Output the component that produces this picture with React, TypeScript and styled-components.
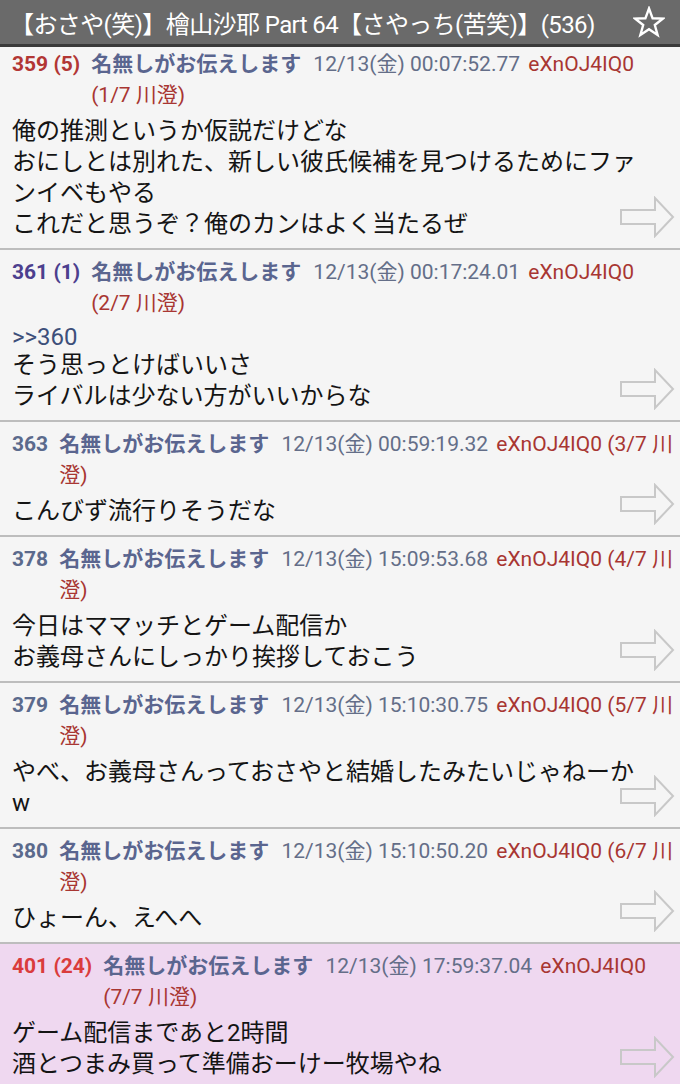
import styled, { createGlobalStyle } from "styled-components";

const GlobalStyle = createGlobalStyle`
  html, body {
    margin: 0;
    padding: 0;
    background: #f5f5f5;
  }
  body {
    font-family: Roboto, "Noto Sans CJK JP", sans-serif;
    overflow: hidden;
  }
`;

const Screen = styled.div`
  width: 680px;
  height: 1084px;
  overflow: hidden;
  display: flex;
  flex-direction: column;
`;

const TitleBar = styled.header`
  flex: none;
  height: 44px;
  background: #6a6a6a;
  border-bottom: 3px solid #3a3a3a;
  display: flex;
  align-items: center;
  padding: 0 14px 0 10px;
  gap: 8px;
`;

const Title = styled.h1`
  flex: 1;
  margin: 0;
  font-size: 24px;
  font-weight: 400;
  color: #ffffff;
  white-space: nowrap;
  overflow: hidden;
  letter-spacing: -0.6px;
`;

const StarButton = styled.button`
  flex: none;
  width: 34px;
  height: 36px;
  border: none;
  padding: 0;
  background: transparent;
  display: flex;
  align-items: center;
  justify-content: center;
`;

const List = styled.main`
  flex: 1;
  overflow: hidden;
`;

const Post = styled.article<{ $pink?: boolean; $first?: boolean }>`
  position: relative;
  background: ${({ $pink }) => ($pink ? "#efd8f0" : "#f5f5f5")};
  border-top: ${({ $first }) => ($first ? "none" : "2px solid #bdbdbd")};
  padding: ${({ $first }) => ($first ? "2px" : "7px")} 4px 8px 12px;
`;

const MetaRow = styled.div`
  display: flex;
  align-items: flex-start;
  font-size: 21px;
  line-height: 31px;
`;

const ResNumber = styled.span<{ $color: string }>`
  flex: none;
  font-weight: 700;
  color: ${({ $color }) => $color};
  margin-right: 11px;
  white-space: nowrap;
`;

const MetaText = styled.div`
  flex: 1;
  min-width: 0;
`;

const Name = styled.span`
  font-weight: 700;
  color: #5a658f;
  margin-right: 7px;
`;

const DateText = styled.span`
  color: #646e88;
  margin-right: 3px;
`;

const PosterId = styled.span`
  color: #a83632;
`;

const Body = styled.div`
  margin-top: 5px;
  padding-right: 30px;
  font-size: 24px;
  line-height: 31px;
  color: #141414;
`;

const Anchor = styled.div`
  color: #3d4f7a;
  line-height: 26px;
`;

const ArrowBox = styled.div`
  position: absolute;
  right: 5px;
  bottom: 10px;
  width: 56px;
  height: 42px;
`;

type PostData = {
  no: number;
  count?: number;
  color: string;
  date: string;
  idx: string;
  anchor?: string;
  lines: string[];
  pink?: boolean;
};

const posts: PostData[] = [
  {
    no: 359,
    count: 5,
    color: "#b23634",
    date: "12/13(金) 00:07:52.77",
    idx: "1/7",
    lines: [
      "俺の推測というか仮説だけどな",
      "おにしとは別れた、新しい彼氏候補を見つけるためにファンイベもやる",
      "これだと思うぞ？俺のカンはよく当たるぜ",
    ],
  },
  {
    no: 361,
    count: 1,
    color: "#4c3f8e",
    date: "12/13(金) 00:17:24.01",
    idx: "2/7",
    anchor: ">>360",
    lines: ["そう思っとけばいいさ", "ライバルは少ない方がいいからな"],
  },
  {
    no: 363,
    color: "#5b6a8c",
    date: "12/13(金) 00:59:19.32",
    idx: "3/7",
    lines: ["こんびず流行りそうだな"],
  },
  {
    no: 378,
    color: "#5b6a8c",
    date: "12/13(金) 15:09:53.68",
    idx: "4/7",
    lines: ["今日はママッチとゲーム配信か", "お義母さんにしっかり挨拶しておこう"],
  },
  {
    no: 379,
    color: "#5b6a8c",
    date: "12/13(金) 15:10:30.75",
    idx: "5/7",
    lines: ["やべ、お義母さんっておさやと結婚したみたいじゃねーかw"],
  },
  {
    no: 380,
    color: "#5b6a8c",
    date: "12/13(金) 15:10:50.20",
    idx: "6/7",
    lines: ["ひょーん、えへへ"],
  },
  {
    no: 401,
    count: 24,
    color: "#da3c3c",
    date: "12/13(金) 17:59:37.04",
    idx: "7/7",
    lines: ["ゲーム配信まであと2時間", "酒とつまみ買って準備おーけー牧場やね"],
    pink: true,
  },
];

const StarIcon = () => (
  <svg width="32" height="32" viewBox="0 0 32 32">
    <path
      d="M16 2.5 L19.6 12.3 L29.8 12.6 L21.8 19 L24.6 29 L16 23.2 L7.4 29 L10.2 19 L2.2 12.6 L12.4 12.3 Z"
      fill="none"
      stroke="#ffffff"
      strokeWidth="2.4"
      strokeLinejoin="miter"
    />
  </svg>
);

const NextArrow = () => (
  <svg width="56" height="42" viewBox="0 0 56 42">
    <path
      d="M2 14 H36 V2 L54 21 L36 40 V28 H2 Z"
      fill="none"
      stroke="#c8c8c8"
      strokeWidth="2"
      strokeLinejoin="miter"
    />
  </svg>
);

const App = () => {
  return (
    <>
      <GlobalStyle />
      <Screen>
        <TitleBar>
          <Title>【おさや(笑)】檜山沙耶 Part 64【さやっち(苦笑)】(536)</Title>
          <StarButton aria-label="お気に入り">
            <StarIcon />
          </StarButton>
        </TitleBar>
        <List>
          {posts.map((p, i) => (
            <Post key={p.no} $pink={p.pink} $first={i === 0}>
              <MetaRow>
                <ResNumber $color={p.color}>
                  {p.no}
                  {p.count !== undefined ? ` (${p.count})` : ""}
                </ResNumber>
                <MetaText>
                  <Name>名無しがお伝えします</Name>{" "}
                  <DateText>{p.date}</DateText>{" "}
                  <PosterId>eXnOJ4IQ0</PosterId>{" "}
                  <PosterId>({p.idx} 川澄)</PosterId>
                </MetaText>
              </MetaRow>
              <Body>
                {p.anchor && <Anchor>{p.anchor}</Anchor>}
                {p.lines.map((l) => (
                  <div key={l}>{l}</div>
                ))}
              </Body>
              <ArrowBox>
                <NextArrow />
              </ArrowBox>
            </Post>
          ))}
        </List>
      </Screen>
    </>
  );
};

export default App;
